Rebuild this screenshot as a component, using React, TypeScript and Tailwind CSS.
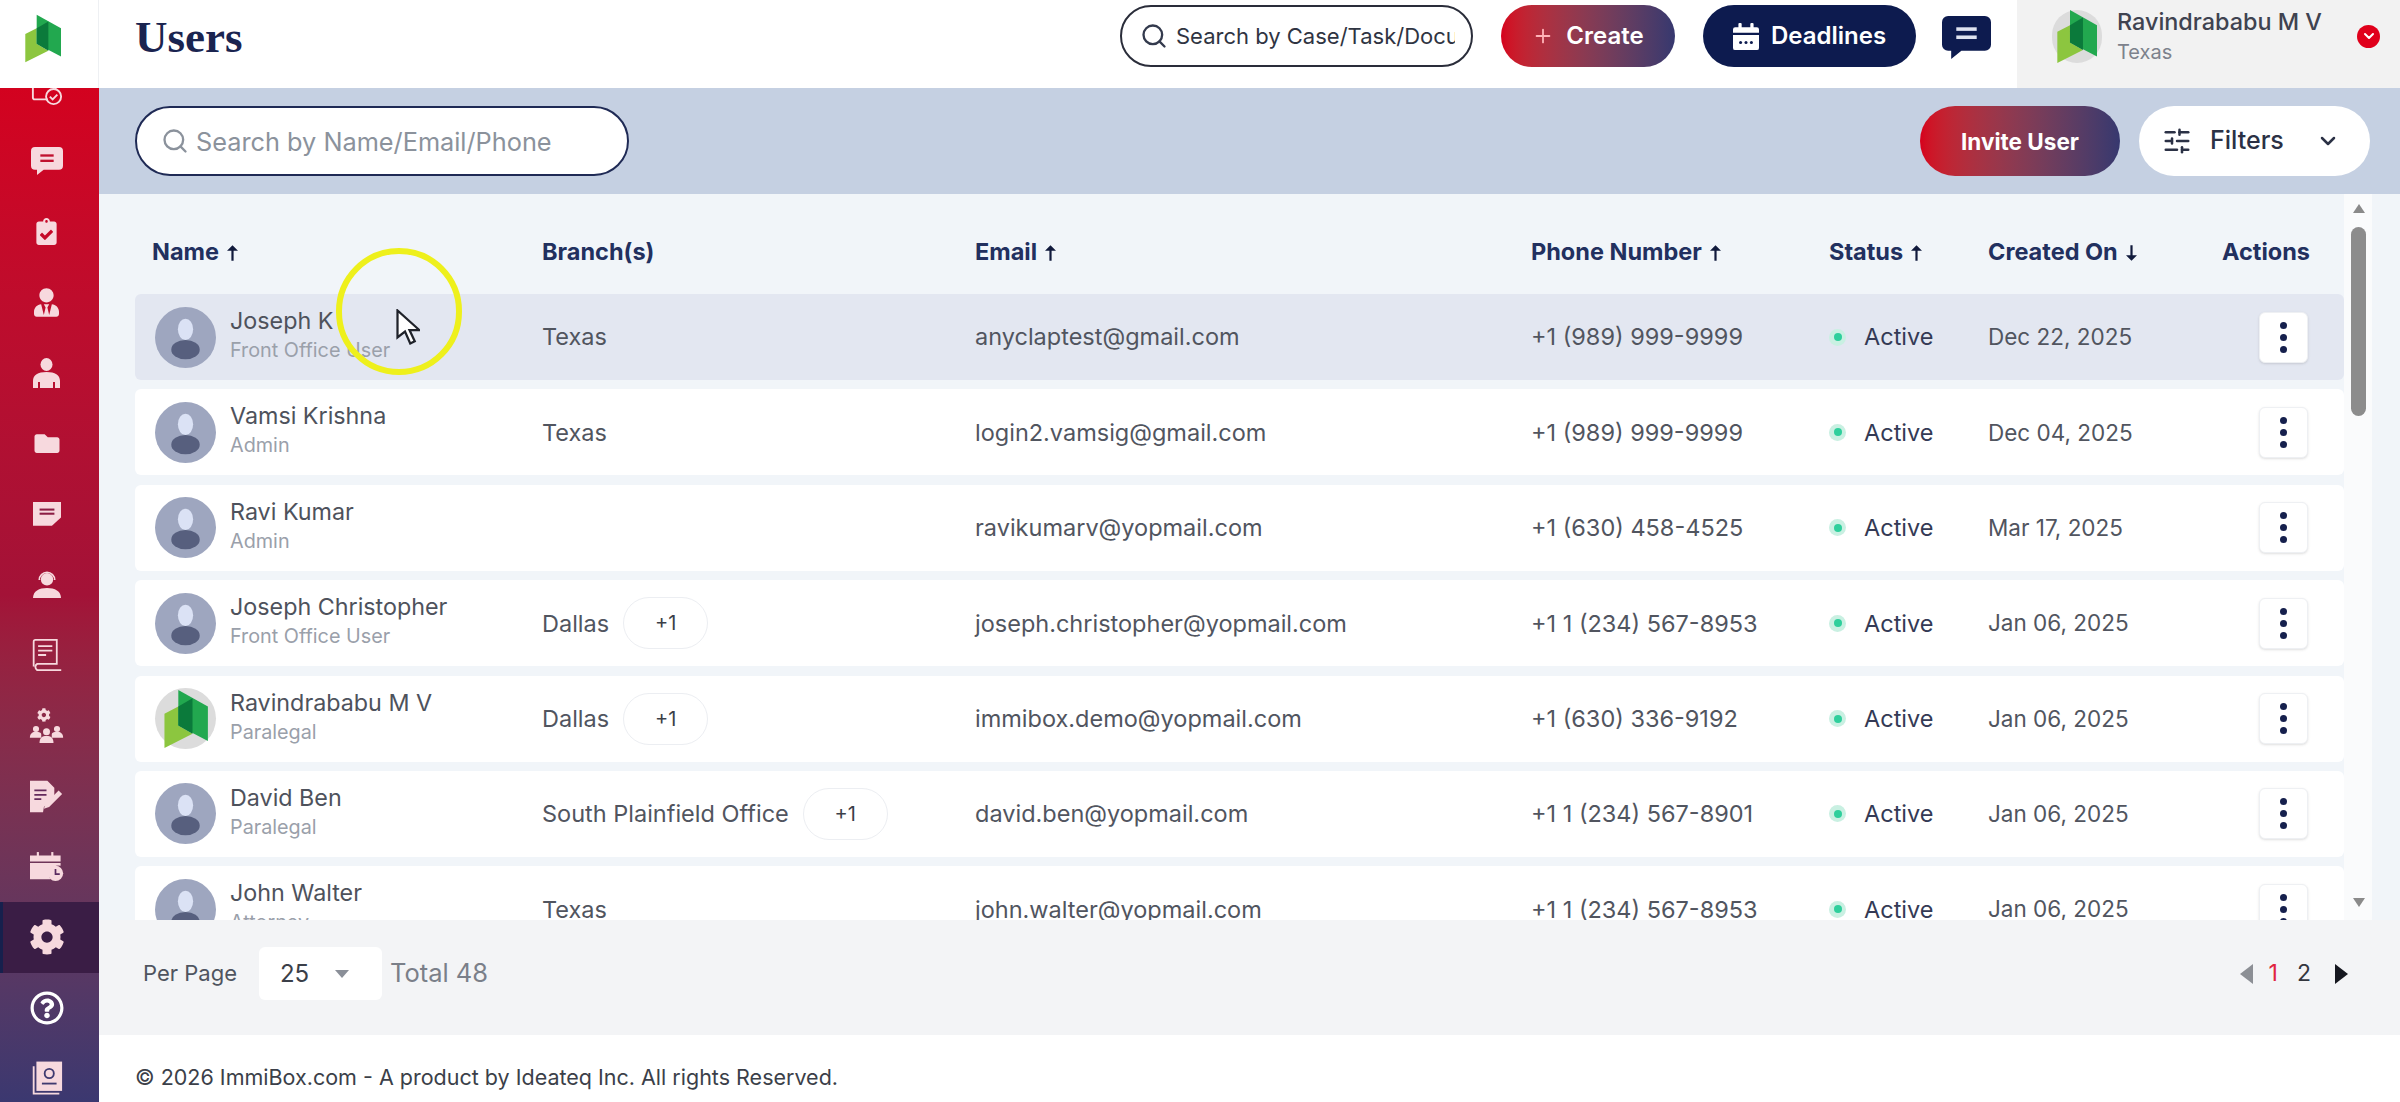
import React from 'react';
import { ChevronDown, Plus, Search, SlidersHorizontal } from 'lucide-react';
import {
  FaClipboardCheck,
  FaCog,
  FaFolder,
  FaRegQuestionCircle,
  FaUserTie,
} from 'react-icons/fa';

type User = {
  name: string;
  role: string;
  branch: string;
  extra?: boolean;
  email: string;
  phone: string;
  created: string;
  logo?: boolean;
};

const users: User[] = [
  { name: 'Joseph K', role: 'Front Office User', branch: 'Texas', email: 'anyclaptest@gmail.com', phone: '+1 (989) 999-9999', created: 'Dec 22, 2025' },
  { name: 'Vamsi Krishna', role: 'Admin', branch: 'Texas', email: 'login2.vamsig@gmail.com', phone: '+1 (989) 999-9999', created: 'Dec 04, 2025' },
  { name: 'Ravi Kumar', role: 'Admin', branch: '', email: 'ravikumarv@yopmail.com', phone: '+1 (630) 458-4525', created: 'Mar 17, 2025' },
  { name: 'Joseph Christopher', role: 'Front Office User', branch: 'Dallas', extra: true, email: 'joseph.christopher@yopmail.com', phone: '+1 1 (234) 567-8953', created: 'Jan 06, 2025' },
  { name: 'Ravindrababu M V', role: 'Paralegal', branch: 'Dallas', extra: true, email: 'immibox.demo@yopmail.com', phone: '+1 (630) 336-9192', created: 'Jan 06, 2025', logo: true },
  { name: 'David Ben', role: 'Paralegal', branch: 'South Plainfield Office', extra: true, email: 'david.ben@yopmail.com', phone: '+1 1 (234) 567-8901', created: 'Jan 06, 2025' },
  { name: 'John Walter', role: 'Attorney', branch: 'Texas', email: 'john.walter@yopmail.com', phone: '+1 1 (234) 567-8953', created: 'Jan 06, 2025' },
];

const Logo = ({ className }: { className: string }) => (
  <svg viewBox="14 9 37 49" className={className}>
    <polygon points="14.3,29 26,23 26,39 38,46 14.3,58" fill="#8cc63f" />
    <polygon points="26,9 51,23 51,52 26,39" fill="#22a84f" />
    <polygon points="26,23 38,16 38,46 26,39" fill="#0b7a3b" />
  </svg>
);

const ChatIcon = ({ className, lines }: { className: string; lines: string }) => (
  <svg viewBox="0 0 48 42" className={className}>
    <path d="M6 0h36a6 6 0 0 1 6 6v22a6 6 0 0 1-6 6H19l-10 8v-8H6a6 6 0 0 1-6-6V6a6 6 0 0 1 6-6z" fill="currentColor" />
    <rect x="14" y="11" width="20" height="3.5" fill={lines} />
    <rect x="14" y="19" width="20" height="3.5" fill={lines} />
  </svg>
);

const Avatar = () => (
  <svg viewBox="0 0 60 60" className="w-[61px] h-[61px] shrink-0">
    <circle cx="30" cy="30" r="30" fill="#9ea6bf" />
    <ellipse cx="30" cy="22" rx="7.5" ry="10.5" fill="#dbe2f5" />
    <ellipse cx="30" cy="42" rx="14" ry="9.5" fill="#575f7e" />
  </svg>
);

const LogoAvatar = () => (
  <div className="w-[61px] h-[61px] shrink-0 rounded-full bg-[#dcdcdc] flex items-center justify-center">
    <Logo className="w-[46px] h-[58px]" />
  </div>
);

// sidebar icons, top to bottom
const SideIcons = [
  <svg key="a" viewBox="0 0 34 34" className="w-[32px] h-[32px]" fill="none" stroke="currentColor" strokeWidth="2">
    <path d="M18 27H4a2 2 0 0 1-2-2V5a2 2 0 0 1 2-2h20a2 2 0 0 1 2 2v11" />
    <rect x="7" y="8" width="4" height="4" fill="currentColor" />
    <circle cx="24" cy="24" r="8" />
    <path d="M20 24l3 3 5-5" />
  </svg>,
  <ChatIcon key="b" className="w-[32px] h-[30px]" lines="#c0112f" />,
  <FaClipboardCheck key="c" className="w-[21px] h-[27px]" />,
  <FaUserTie key="d" className="w-[25px] h-[29px]" />,
  <svg key="e" viewBox="0 0 27 30" className="w-[27px] h-[30px]" fill="currentColor">
    <ellipse cx="13.5" cy="6.5" rx="6" ry="6.5" />
    <path d="M0 30v-7c0-6 5-9 13.5-9S27 17 27 23v7h-5v-6h-2v6H7v-6H5v6z" />
  </svg>,
  <FaFolder key="f" className="w-[28px] h-[25px]" />,
  <svg key="g" viewBox="0 0 34 30" className="w-[28px] h-[27px]" fill="currentColor">
    <path d="M0 1h34v19L23 30H0z" />
    <rect x="8" y="9" width="18" height="2.5" fill="#8b1d44" />
    <rect x="8" y="14" width="18" height="2.5" fill="#8b1d44" />
  </svg>,
  <svg key="h" viewBox="0 0 36 36" className="w-[28px] h-[30px]" fill="currentColor">
    <circle cx="18" cy="12" r="8" />
    <path d="M8 13a10 10 0 0 1 20 0" fill="none" stroke="currentColor" strokeWidth="2" />
    <path d="M0 36c0-9 8-13 18-13s18 4 18 13z" />
  </svg>,
  <svg key="i" viewBox="0 0 36 36" className="w-[32px] h-[36px]" fill="none" stroke="currentColor" strokeWidth="2">
    <path d="M3 31V3a2 2 0 0 1 2-2h24v27H7a4 4 0 0 0 0 7h27" />
    <path d="M8 8h16M8 13h16M8 18h9" />
  </svg>,
  <svg key="j" viewBox="0 0 40 40" className="w-[35px] h-[39px]" fill="currentColor">
    <FaCog x="9" y="0" width="22" height="22" />
    <circle cx="8" cy="24" r="3.5" />
    <path d="M1 34c0-5 3-7 7-7s6 1 6 3v4z" />
    <circle cx="32" cy="24" r="3.5" />
    <path d="M39 34c0-5-3-7-7-7s-6 1-6 3v4z" />
    <circle cx="20" cy="27" r="4" />
    <path d="M12 40c0-6 3-8 8-8s8 2 8 8z" />
  </svg>,
  <svg key="k" viewBox="0 0 38 36" className="w-[33px] h-[33px]" fill="currentColor">
    <path d="M0 0h20l8 8v10L16 30l-1 6H0z" />
    <path d="M5 11h14M5 16h14M5 21h8" stroke="#642a5c" strokeWidth="2" />
    <path d="M33 11l4 4-15 15-6 2 2-6z" />
  </svg>,
  <svg key="l" viewBox="0 0 40 36" className="w-[34px] h-[33px]" fill="currentColor">
    <path d="M0 5h36v7H0zM0 14h36v3a11 11 0 0 0-12 16H0z" />
    <rect x="8" y="1" width="2.5" height="5" />
    <rect x="25" y="1" width="2.5" height="5" />
    <circle cx="30" cy="26" r="9" />
    <path d="M30 21v6h5" fill="none" stroke="#5a2a60" strokeWidth="2" />
  </svg>,
  <FaCog key="m" className="w-[36px] h-[36px]" />,
  <FaRegQuestionCircle key="n" className="w-[34px] h-[34px] text-white" />,
  <svg key="o" viewBox="0 0 36 38" className="w-[33px] h-[36px]" fill="none" stroke="currentColor" strokeWidth="2">
    <rect x="8" y="1" width="26" height="30" fill="currentColor" />
    <circle cx="21" cy="13" r="5" stroke="#3f3a70" />
    <path d="M13 24h16" stroke="#3f3a70" />
    <path d="M4 5v30h28" />
  </svg>,
];

const Sidebar = () => (
  <aside className="w-[99px] shrink-0 flex flex-col h-full">
    <div className="h-[88px] shrink-0 bg-white border-r border-[#eef0f3] flex items-start pt-[14px] pl-[25px]">
      <Logo className="w-[36px] h-[49px]" />
    </div>
    <nav className="flex-1 overflow-hidden bg-gradient-to-b from-[#d3021f] via-[#a31237] to-[#3b3870]">
      <div className="-mt-[33px]">
        {SideIcons.map((icon, i) => (
          <div
            key={i}
            className={`h-[70.6px] flex items-center justify-center pr-[6px] text-[#f7d9de] ${i === 12 ? 'bg-[#3a1d45] border-l-[3px] border-[#16204d] pr-[9px]' : ''}`}
          >
            {icon}
          </div>
        ))}
      </div>
    </nav>
  </aside>
);

const TopBar = () => (
  <header className="h-[88px] shrink-0 bg-white flex items-start pl-[36px]">
    <h1 className="mt-[15px] text-[45px] font-bold text-[#1a2450] leading-none font-['Liberation_Serif',serif]">Users</h1>
    <div className="ml-auto mt-[5px] w-[353px] h-[62px] rounded-full border-2 border-[#2a2d3a] flex items-center pl-[18px] pr-[16px] gap-[8px]">
      <Search className="w-[28px] h-[28px] shrink-0 text-[#333a4d]" strokeWidth={2} />
      <input
        readOnly
        placeholder="Search by Case/Task/Document"
        className="flex-1 min-w-0 bg-transparent outline-none text-[22px] placeholder:text-[#2f3442]"
      />
    </div>
    <button className="ml-[28px] mt-[5px] w-[174px] h-[62px] rounded-full bg-gradient-to-r from-[#d6001c] to-[#36386f] flex items-center justify-center gap-[12px] text-white text-[24px] font-semibold">
      <Plus className="w-[22px] h-[22px] text-[#ffb3b8]" strokeWidth={2} />
      Create
    </button>
    <button className="ml-[28px] mt-[5px] w-[213px] h-[62px] rounded-full bg-[#0d1b4f] flex items-center justify-center gap-[12px] text-white text-[24px] font-semibold">
      <svg viewBox="0 0 24 26" className="w-[26px] h-[30px]" fill="white">
        <path d="M2 5h20a2 2 0 0 1 2 2v3H0V7a2 2 0 0 1 2-2zM0 12h24v12a2 2 0 0 1-2 2H2a2 2 0 0 1-2-2z" />
        <rect x="5" y="1" width="3" height="6" rx="1" />
        <rect x="16" y="1" width="3" height="6" rx="1" />
        <circle cx="7" cy="19" r="1.4" fill="#0d1b4f" />
        <circle cx="12" cy="19" r="1.4" fill="#0d1b4f" />
        <circle cx="17" cy="19" r="1.4" fill="#0d1b4f" />
      </svg>
      Deadlines
    </button>
    <ChatIcon className="ml-[26px] mt-[16px] w-[49px] h-[43px] text-[#0d1b4f]" lines="#dfe3f0" />
    <div className="ml-[26px] w-[383px] h-full bg-[#f2f2f2] flex items-center pl-[35px] pb-[16px]">
      <div className="w-[50px] h-[53px] rounded-full bg-[#dcdcdc] flex items-center justify-center">
        <Logo className="w-[40px] h-[53px]" />
      </div>
      <div className="ml-[15px] flex flex-col">
        <span className="text-[23.4px] leading-[30px] text-[#3f4350] font-medium">Ravindrababu M V</span>
        <span className="text-[20px] leading-[26px] mt-[2px] text-[#7d828c]">Texas</span>
      </div>
      <span className="ml-auto mr-[20px] w-[23px] h-[23px] rounded-full bg-[#e0001b] flex items-center justify-center">
        <ChevronDown className="w-[16px] h-[16px] text-white" strokeWidth={3} />
      </span>
    </div>
  </header>
);

const Toolbar = () => (
  <div className="h-[106px] shrink-0 bg-[#c5d0e2] flex items-center pl-[36px] pr-[30px]">
    <div className="w-[494px] h-[70px] rounded-full bg-white border-2 border-[#1f2a55] flex items-center pl-[24px] gap-[7px]">
      <Search className="w-[28px] h-[28px] shrink-0 text-[#8b929c]" strokeWidth={2} />
      <input
        readOnly
        placeholder="Search by Name/Email/Phone"
        className="flex-1 min-w-0 pt-[2px] bg-transparent outline-none text-[25.3px] placeholder:text-[#8b929c]"
      />
    </div>
    <button className="ml-auto w-[200px] h-[70px] pt-[2px] rounded-full bg-gradient-to-r from-[#d6001c] to-[#36386f] text-white text-[22.5px] font-bold">
      Invite User
    </button>
    <button className="ml-[19px] w-[231px] h-[70px] rounded-full bg-white flex items-center pl-[23px] text-[#2b3145]">
      <SlidersHorizontal className="w-[30px] h-[30px]" strokeWidth={2} />
      <span className="ml-[18px] text-[25px] font-medium">Filters</span>
      <ChevronDown className="ml-[32px] w-[24px] h-[24px]" strokeWidth={2.5} />
    </button>
  </div>
);

const Arrow = ({ down }: { down?: boolean }) => (
  <svg viewBox="0 0 10 14" className="inline-block w-[11px] h-[16px] ml-[8px] align-[-1px]" fill="#111a3c">
    {down ? <path d="M4 0h2v9h4l-5 5-5-5h4z" /> : <path d="M4 14h2V5h4L5 0 0 5h4z" />}
  </svg>
);

const cols = 'grid grid-cols-[390px_433px_556px_298px_159px_234px_1fr] items-center pl-[17px]';

const TableHeader = () => (
  <div className={`${cols} h-[84px] text-[23.5px] font-bold text-[#22305f] whitespace-nowrap`}>
    <div>Name<Arrow /></div>
    <div>Branch(s)</div>
    <div>Email<Arrow /></div>
    <div>Phone Number<Arrow /></div>
    <div>Status<Arrow /></div>
    <div>Created On<Arrow down /></div>
    <div>Actions</div>
  </div>
);

const UserRow = ({ user, active }: { user: User; active: boolean }) => (
  <div className={`${cols} h-[86px] mb-[9.4px] rounded-[6px] text-[23.5px] text-[#51555f] whitespace-nowrap ${active ? 'bg-[#e3e7f1]' : 'bg-white'}`}>
    <div className="flex items-center gap-[14px] pl-[3px]">
      {user.logo ? <LogoAvatar /> : <Avatar />}
      <div className="flex flex-col pb-[5px]">
        <span className="text-[23.3px] leading-[28px] text-[#4e525c]">{user.name}</span>
        <span className="text-[19.8px] leading-[24px] mt-[3px] text-[#9aa0aa]">{user.role}</span>
      </div>
    </div>
    <div className="flex items-center">
      {user.branch}
      {user.extra && (
        <span className="ml-[14px] w-[85px] h-[52px] rounded-[26px] bg-white border border-[#eceef2] flex items-center justify-center text-[20px] text-[#3b3f49]">
          +1
        </span>
      )}
    </div>
    <div>{user.email}</div>
    <div>{user.phone}</div>
    <div className="flex items-center text-[#343a55]">
      <span className="w-[17px] h-[17px] rounded-full bg-[#c9f0e2] flex items-center justify-center">
        <span className="w-[8px] h-[8px] rounded-full bg-[#2fcf9c]" />
      </span>
      <span className="ml-[18px]">Active</span>
    </div>
    <div className="text-[22.5px]">{user.created}</div>
    <div className="flex justify-end pr-[36px]">
      <button className="w-[49px] h-[51px] rounded-[6px] bg-white border border-[#eef0f3] shadow-sm flex flex-col items-center justify-center gap-[5px]">
        <span className="w-[7px] h-[7px] rounded-full bg-[#16204d]" />
        <span className="w-[7px] h-[7px] rounded-full bg-[#16204d]" />
        <span className="w-[7px] h-[7px] rounded-full bg-[#16204d]" />
      </button>
    </div>
  </div>
);

const Scrollbar = () => (
  <div className="w-[28px] shrink-0 bg-[#fafbfc] relative">
    <div className="absolute left-[9px] top-[10px] w-0 h-0 border-x-[6px] border-x-transparent border-b-[9px] border-b-[#8a8a8a]" />
    <div className="absolute left-[7px] top-[33px] w-[15px] h-[189px] rounded-full bg-[#8c8c8c]" />
    <div className="absolute left-[9px] bottom-[13px] w-0 h-0 border-x-[6px] border-x-transparent border-t-[9px] border-t-[#8a8a8a]" />
  </div>
);

const Pagination = () => (
  <div className="h-[115px] shrink-0 bg-[#f3f4f6] flex items-start pt-[27px] pl-[44px] pr-[52px]">
    <div className="h-[53px] flex items-center text-[22px] text-[#4f5460]">Per Page</div>
    <div className="ml-[22px] w-[123px] h-[53px] bg-white rounded-[6px] flex items-center pl-[21px] text-[#3b3f49] text-[24px]">
      25
      <span className="ml-[26px] w-0 h-0 border-x-[7px] border-x-transparent border-t-[8px] border-t-[#8a8f98]" />
    </div>
    <div className="ml-[8px] h-[53px] flex items-center text-[25.5px] text-[#7a7f89]">Total 48</div>
    <div className="ml-auto h-[53px] flex items-center text-[23px]">
      <span className="w-0 h-0 border-y-[10px] border-y-transparent border-r-[13px] border-r-[#8c8f95]" />
      <span className="ml-[16px] text-[#e0243f]">1</span>
      <span className="ml-[19px] text-[#33363e]">2</span>
      <span className="ml-[24px] w-0 h-0 border-y-[10px] border-y-transparent border-l-[13px] border-l-[#15171f]" />
    </div>
  </div>
);

const CursorMark = () => (
  <div className="absolute left-[336px] top-[248px] z-20 w-[126px] h-[127px] rounded-full border-[6px] border-[#eef01c]">
    <svg viewBox="0 0 16 24" className="absolute left-[54px] top-[55px] w-[24px] h-[36px]" fill="white" stroke="#20232b" strokeWidth="1.5">
      <path d="M1 1v18l5-4 3.5 8 3-1.5L9 14h6.5z" />
    </svg>
  </div>
);

const App: React.FC = () => {
  return (
    <div className="flex h-screen w-full overflow-hidden bg-white relative font-['Inter',sans-serif]">
      <Sidebar />
      <main className="flex-1 min-w-0 flex flex-col">
        <TopBar />
        <Toolbar />
        <div className="flex-1 min-h-0 flex overflow-hidden bg-[#f1f5f9] pl-[36px] pr-[28px]">
          <div className="flex-1 min-w-0 pt-[16px]">
            <TableHeader />
            {users.map((u, i) => (
              <UserRow key={u.name} user={u} active={i === 0} />
            ))}
          </div>
          <Scrollbar />
        </div>
        <Pagination />
        <footer className="h-[67px] shrink-0 bg-white flex items-center pl-[36px] pt-[18px] text-[21.5px] text-[#3b3f49]">
          © 2026 ImmiBox.com - A product by Ideateq Inc. All rights Reserved.
        </footer>
      </main>
      <CursorMark />
    </div>
  );
};

export default App;
